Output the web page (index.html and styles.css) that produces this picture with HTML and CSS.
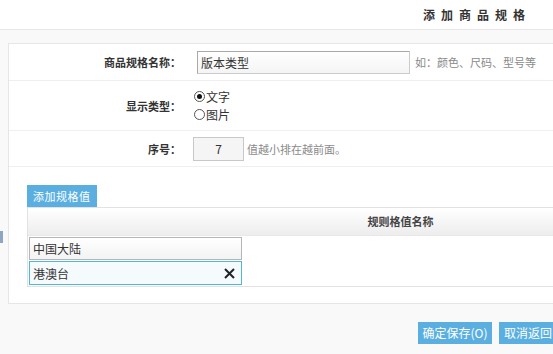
FILE: index.html
```html
<!DOCTYPE html>
<html lang="zh">
<head>
<meta charset="utf-8">
<title>添加商品规格</title>
<link rel="stylesheet" href="styles.css">
</head>
<body>
<div class="page">
  <div class="topbar"><span class="title">添加商品规格</span></div>
  <div class="card">
    <div class="row row-name">
      <div class="label">商品规格名称：</div>
      <div class="value">
        <div class="text-input name-input">版本类型</div>
        <span class="hint">如：颜色、尺码、型号等</span>
      </div>
    </div>
    <div class="row row-type">
      <div class="label">显示类型：</div>
      <div class="value radios">
        <label class="radio"><span class="dot checked"></span>文字</label>
        <label class="radio"><span class="dot"></span>图片</label>
      </div>
    </div>
    <div class="row row-order">
      <div class="label">序号：</div>
      <div class="value">
        <div class="order-input">7</div>
        <span class="hint">值越小排在越前面。</span>
      </div>
    </div>
    <div class="values">
      <div class="add-btn">添加规格值</div>
      <div class="spec-table">
        <div class="thead">规则格值名称</div>
        <div class="tbody">
          <div class="val-input">中国大陆</div>
          <div class="val-input active">港澳台
            <svg class="clear" width="11" height="11" viewBox="0 0 11 11"><path d="M1 1L10 10M10 1L1 10" stroke="#222" stroke-width="2" fill="none"/></svg>
          </div>
        </div>
      </div>
    </div>
  </div>
  <div class="footer">
    <div class="btn">确定保存(O)</div>
    <div class="btn">取消返回(C)</div>
  </div>
  <div class="side-mark"></div>
</div>
</body>
</html>
```
FILE: styles.css
```css
html, body {
  margin: 0;
  padding: 0;
  background: #f9f9f9;
  overflow: hidden;
}
body {
  font-family: "Noto Sans CJK SC", "Noto Sans", sans-serif;
  font-size: 11px;
  color: #333;
  width: 553px;
  height: 354px;
}
.page {
  position: relative;
  width: 620px;
}
.topbar {
  height: 29px;
  background: #fff;
  border-bottom: 1px solid #e8e8e8;
  display: flex;
  justify-content: flex-end;
  align-items: center;
  padding-right: 89px;
}
.title {
  font-weight: bold;
  font-size: 12px;
  letter-spacing: 6px;
  color: #333;
}
.card {
  margin: 13px 0 0 8px;
  background: #fff;
  border: 1px solid #e6e6e6;
  border-right: none;
  height: 259px;
}
.row {
  display: flex;
  align-items: center;
  border-bottom: 1px solid #efefef;
}
.row-name { height: 36px; }
.row-type { height: 49px; }
.row-order { height: 35px; }
.label {
  width: 172px;
  text-align: right;
  font-weight: bold;
  color: #333;
}
.value {
  display: flex;
  align-items: center;
  padding-left: 12px;
}
.text-input {
  box-sizing: border-box;
  height: 23px;
  border: 1px solid #a9a9a9;
  border-right-color: #ccc;
  border-bottom-color: #ccc;
  background: linear-gradient(#fff, #f4f4f4);
  line-height: 21px;
  padding-left: 3px;
  font-size: 12px;
}
.name-input {
  width: 213px;
  margin-left: 4px;
}
.hint {
  color: #8a8a8a;
  margin-left: 5px;
}
.radios {
  flex-direction: column;
  align-items: flex-start;
  padding-left: 13px;
}
.radio {
  display: flex;
  align-items: center;
  height: 18px;
  color: #333;
  font-size: 12px;
}
.dot {
  box-sizing: border-box;
  width: 11px;
  height: 11px;
  border: 1px solid #555;
  border-radius: 50%;
  margin-right: 1px;
  position: relative;
}
.dot.checked::after {
  content: "";
  position: absolute;
  left: 2px;
  top: 2px;
  width: 5px;
  height: 5px;
  border-radius: 50%;
  background: #111;
}
.order-input {
  box-sizing: border-box;
  width: 51px;
  height: 24px;
  border: 1px solid #c8c8c8;
  background: #f5f5f5;
  text-align: center;
  line-height: 22px;
  font-size: 12px;
}
.order-input + .hint { margin-left: 3px; }
.values {
  padding: 18px 0 0 18px;
}
.add-btn {
  display: inline-block;
  background: #5aafe0;
  color: #fff;
  height: 22px;
  line-height: 22px;
  padding: 0 6px;
  letter-spacing: 0.5px;
  white-space: nowrap;
  vertical-align: top;
}
.spec-table {
  width: 746px;
  border-left: 1px solid #e2e2e2;
  border-top: 1px solid #e2e2e2;
  border-bottom: 1px solid #e2e2e2;
  box-sizing: border-box;
}
.thead {
  height: 27px;
  line-height: 27px;
  text-align: center;
  font-weight: bold;
  color: #444;
  background: linear-gradient(#fff, #ededed);
  border-bottom: 1px solid #e8e8e8;
}
.tbody {
  padding: 1px 0 1px 1px;
  display: flex;
  flex-direction: column;
  gap: 1px;
}
.val-input {
  box-sizing: border-box;
  width: 213px;
  height: 23px;
  border: 1px solid #b5b5b5;
  background: linear-gradient(#fff, #f3f3f3);
  line-height: 21px;
  padding-left: 3px;
  display: flex;
  align-items: center;
  justify-content: space-between;
  font-size: 12px;
}
.val-input.active {
  height: 24px;
  border-color: #4fb8d4;
  background: #f5fafd;
}
.clear {
  margin-right: 6px;
}
.footer {
  display: flex;
  gap: 7px;
  padding: 18px 0 0 418px;
}
.btn {
  height: 22px;
  line-height: 22px;
  width: 74px;
  text-align: center;
  background: #5aafe0;
  color: #fff;
  font-size: 12px;
}
.side-mark {
  position: absolute;
  left: 0;
  top: 231px;
  width: 3px;
  height: 12px;
  background: #8ea6c6;
}
```
